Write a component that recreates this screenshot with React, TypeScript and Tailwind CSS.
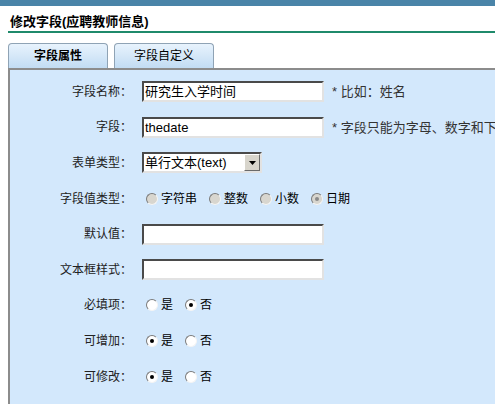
import React from "react";

const font = { fontFamily: '"Liberation Sans", "Noto Sans CJK SC", sans-serif' };

function Radio({ checked, disabled, label }: { checked?: boolean; disabled?: boolean; label: string }) {
  return (
    <span className="flex items-center mr-[12px] shrink-0">
      <span
        className={
          "relative w-[12px] h-[12px] rounded-full border border-t-[#7a7a7a] border-l-[#7a7a7a] border-b-[#f4f4f4] border-r-[#f4f4f4] flex items-center justify-center " +
          (disabled ? "bg-[#d8d6cf]" : "bg-white")
        }
      >
        {checked && (
          <span className={"w-[4px] h-[4px] rounded-full " + (disabled ? "bg-[#8a8a8a]" : "bg-black")} />
        )}
      </span>
      <span className="ml-[3px] text-[12px] text-black leading-none whitespace-nowrap">{label}</span>
    </span>
  );
}

function Input({ value }: { value?: string }) {
  return (
    <div className="w-[182px] shrink-0 h-[21px] bg-white border-2 border-t-[#4a4a4a] border-l-[#4a4a4a] border-b-[#e2e2e2] border-r-[#e2e2e2] flex items-center pl-[1px] text-[13px] text-black overflow-hidden whitespace-nowrap">
      {value}
    </div>
  );
}

function Row({ label, children }: { label: string; children: React.ReactNode }) {
  return (
    <div className="flex items-center h-[35.6px] overflow-hidden">
      <div className="w-[124px] shrink-0 text-right text-[12px] text-[#222] pr-[2px]">{label}</div>
      <div className="ml-[8px] flex items-center">{children}</div>
    </div>
  );
}

export default function App() {
  return (
    <div className="w-[495px] h-[404px] bg-white flex flex-col overflow-hidden" style={font}>
      <div className="h-[6px] bg-[#4a84a8] shrink-0" />
      <div className="ml-[8px] pl-[2px] pt-[9px] pb-[2px] border-b-2 border-[#1f8a6b] text-[13px] font-bold text-black leading-[14px] shrink-0">
        修改字段(应聘教师信息)
      </div>
      <div className="flex ml-[8px] mt-[10px] gap-[6px] shrink-0">
        <div className="w-[100px] h-[25px] rounded-t-[4px] border border-b-0 border-[#8fa3b5] bg-gradient-to-b from-[#e8f3fd] to-[#c2dcf3] flex items-center justify-center text-[12px] font-bold text-black">
          字段属性
        </div>
        <div className="w-[100px] h-[25px] rounded-t-[4px] border border-b-0 border-[#8fa3b5] bg-gradient-to-b from-[#e8f3fd] to-[#c2dcf3] flex items-center justify-center text-[12px] text-black">
          字段自定义
        </div>
      </div>
      <div className="ml-[8px] flex-1 bg-[#d3e8fc] border-t-2 border-l-2 border-[#8c8c8c] pt-[4px]">
        <Row label="字段名称：">
          <Input value="研究生入学时间" />
          <span className="ml-[8px] text-[13px] text-[#333] whitespace-nowrap">* 比如：姓名</span>
        </Row>
        <Row label="字段：">
          <Input value="thedate" />
          <span className="ml-[8px] text-[13px] text-[#333] whitespace-nowrap">* 字段只能为字母、数字和下划线</span>
        </Row>
        <Row label="表单类型：">
          <div className="w-[120px] shrink-0 h-[21px] bg-white border-2 border-t-[#4a4a4a] border-l-[#4a4a4a] border-b-[#e2e2e2] border-r-[#e2e2e2] flex items-center text-[13px]">
            <span className="flex-1 pl-[1px] whitespace-nowrap">单行文本(text)</span>
            <span className="w-[16px] h-[17px] bg-[#d8d5cc] border border-t-white border-l-white border-b-[#6a6a6a] border-r-[#6a6a6a] flex items-center justify-center">
              <svg width="7" height="4" viewBox="0 0 7 4"><path d="M0 0h7L3.5 4z" fill="#000" /></svg>
            </span>
          </div>
        </Row>
        <Row label="字段值类型：">
          <span className="ml-[4px] flex items-center">
            <Radio disabled label="字符串" />
            <Radio disabled label="整数" />
            <Radio disabled label="小数" />
            <Radio disabled checked label="日期" />
          </span>
        </Row>
        <Row label="默认值：">
          <Input />
        </Row>
        <Row label="文本框样式：">
          <Input />
        </Row>
        <Row label="必填项：">
          <span className="ml-[4px] flex items-center">
            <Radio label="是" />
            <Radio checked label="否" />
          </span>
        </Row>
        <Row label="可增加：">
          <span className="ml-[4px] flex items-center">
            <Radio checked label="是" />
            <Radio label="否" />
          </span>
        </Row>
        <Row label="可修改：">
          <span className="ml-[4px] flex items-center">
            <Radio checked label="是" />
            <Radio label="否" />
          </span>
        </Row>
      </div>
    </div>
  );
}
